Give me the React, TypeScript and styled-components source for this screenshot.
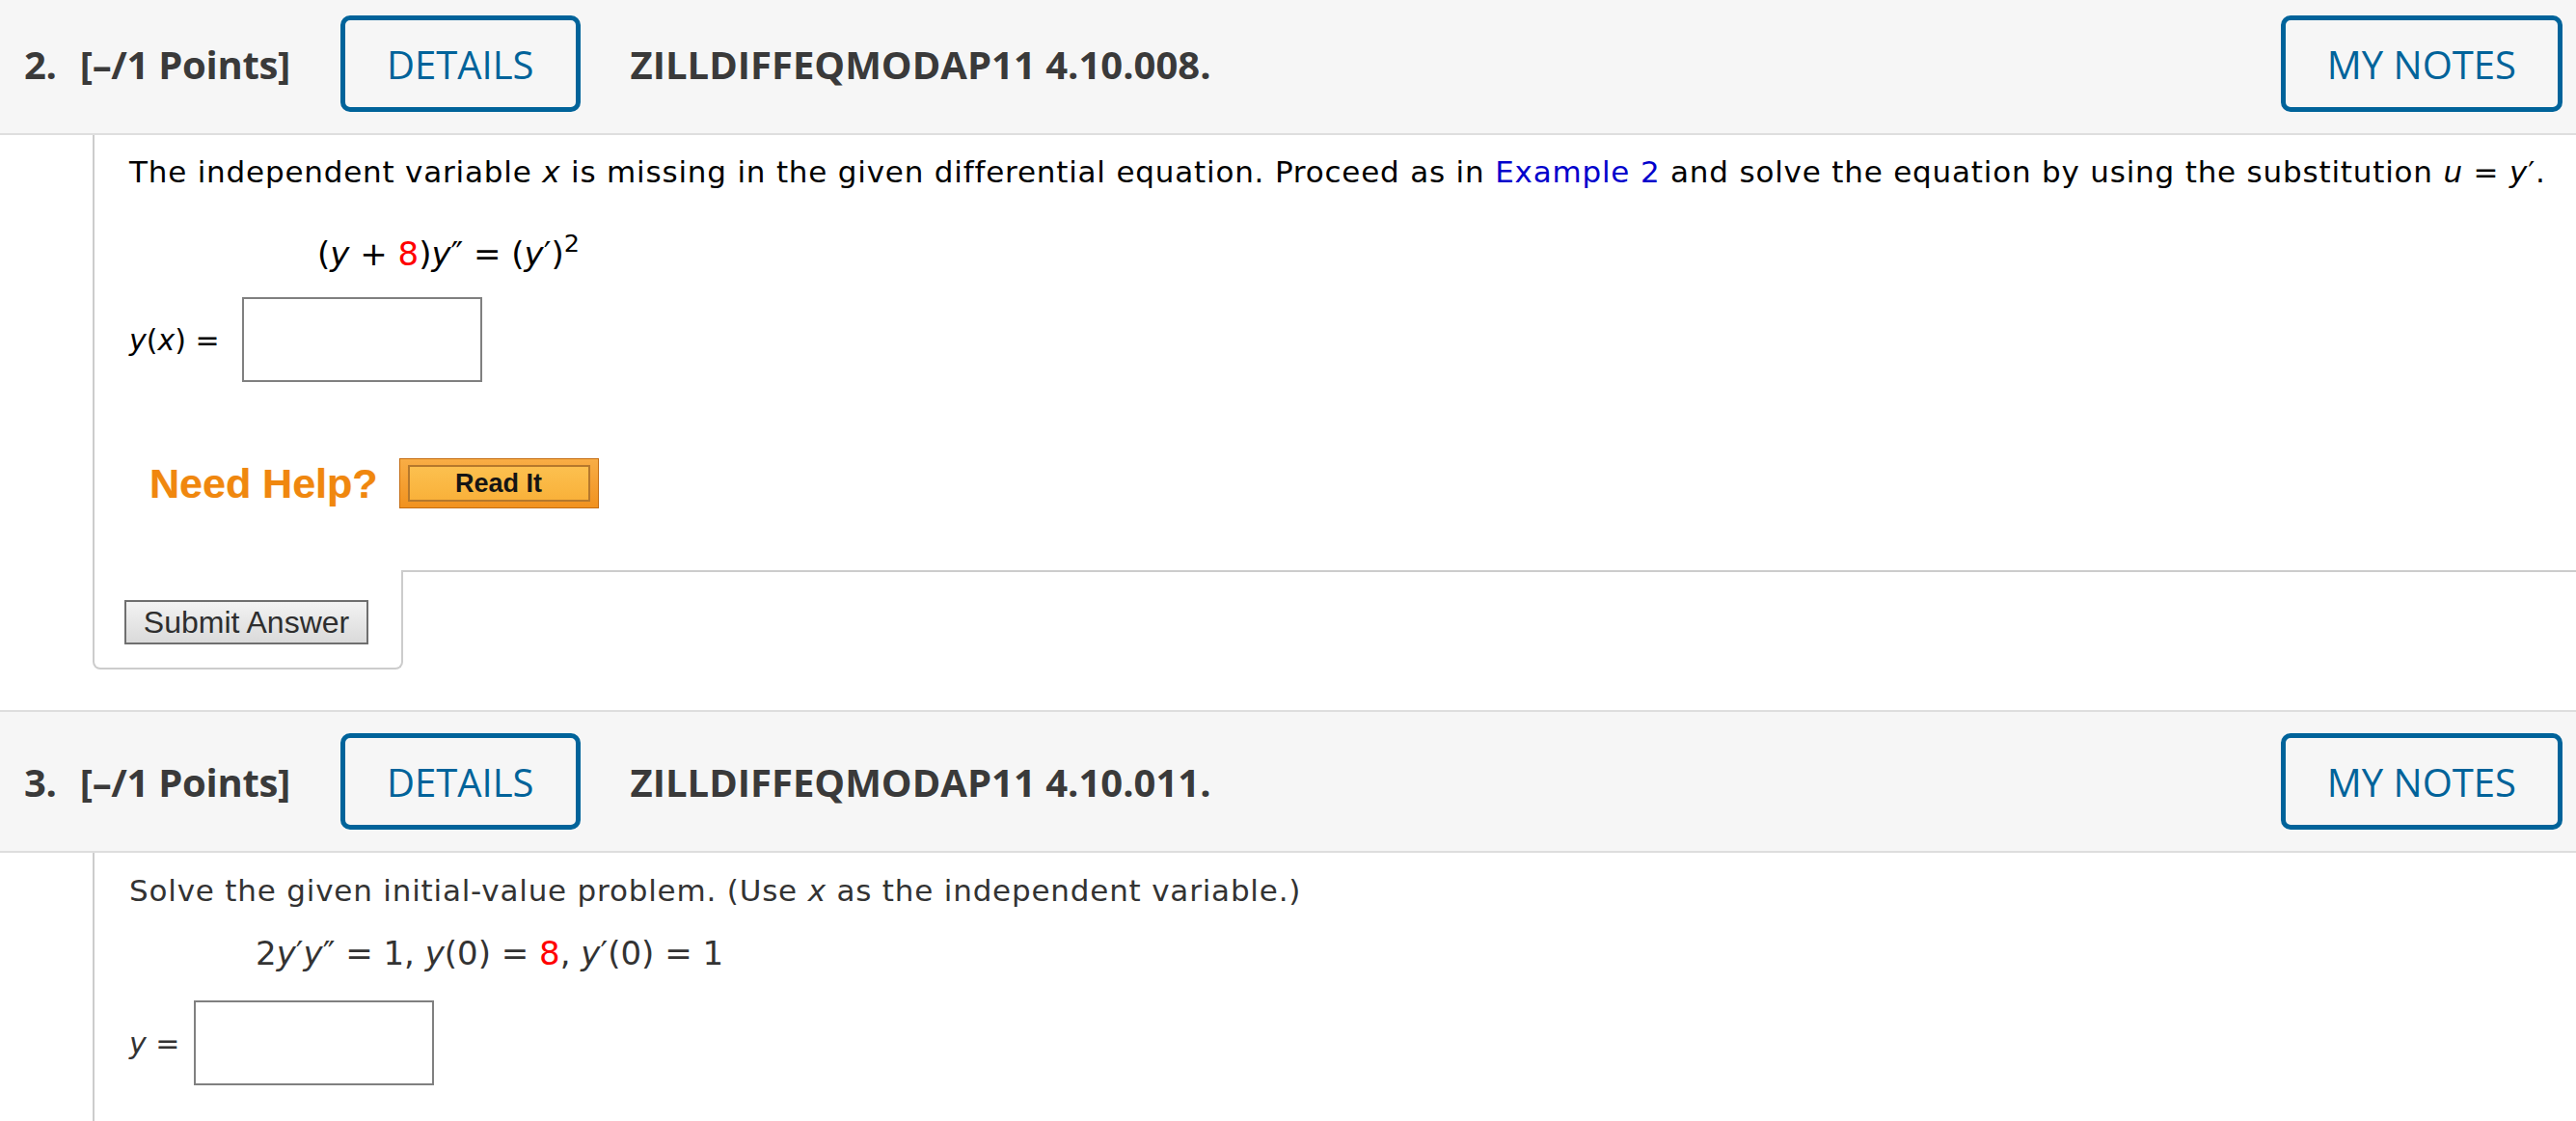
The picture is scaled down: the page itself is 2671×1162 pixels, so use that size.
import React from "react";
import styled, { createGlobalStyle } from "styled-components";

const Global = createGlobalStyle`
  html, body { margin: 0; padding: 0; background: #fff; }
  body { overflow: hidden; }
  #root { width: 2671px; height: 1162px; overflow: hidden; }
`;

const Page = styled.div`
  margin-top: -8px;
  display: flex;
  flex-direction: column;
`;

const Question = styled.section<{ $gap?: number }>`
  display: flex;
  flex-direction: column;
  margin-top: ${(p) => p.$gap ?? 0}px;
`;

const Header = styled.header`
  display: flex;
  align-items: center;
  gap: 52px;
  height: 144px;
  box-sizing: content-box;
  padding: 0 14px 0 25px;
  background: #f6f6f6;
  border-top: 2px solid #dedede;
  border-bottom: 2px solid #dedede;
  font-family: "Open Sans", "Liberation Sans", sans-serif;
  font-size: 40px;
  color: #3a3a3a;
`;

const TitleGroup = styled.div`
  display: flex;
  align-items: center;
  gap: 24px;
  font-weight: 700;
  letter-spacing: -0.3px;
`;

const Code = styled.span`
  font-weight: 700;
  flex: 1;
`;

const OutlineButton = styled.button`
  box-sizing: border-box;
  height: 100px;
  padding: 0 43px;
  border: 5px solid #00639a;
  border-radius: 10px;
  background: transparent;
  color: #00639a;
  font-family: "Open Sans", "Liberation Sans", sans-serif;
  font-size: 40px;
  font-weight: 500;
  cursor: pointer;
`;

const Body = styled.div<{ $top: number; $bottom: number }>`
  margin-left: 96px;
  border-left: 2px solid #cccccc;
  padding: ${(p) => p.$top}px 0 ${(p) => p.$bottom}px 36px;
  font-family: "DejaVu Sans", Verdana, sans-serif;
  display: flex;
  flex-direction: column;
  align-items: flex-start;
`;

const Prompt = styled.p<{ $color: string }>`
  margin: 0;
  font-size: 31px;
  letter-spacing: 0.8px;
  line-height: 40px;
  color: ${(p) => p.$color};
  white-space: nowrap;
`;

const Var = styled.i`
  font-style: italic;
`;

const Link = styled.a`
  color: #0000cc;
  text-decoration: none;
`;

const Equation = styled.div<{ $indent: number; $top: number; $color: string }>`
  margin: ${(p) => p.$top}px 0 0 ${(p) => p.$indent}px;
  font-size: 34px;
  line-height: 40px;
  color: ${(p) => p.$color};
  white-space: nowrap;
`;

const Red = styled.span`
  color: #ff0000;
`;

const Sup = styled.sup`
  font-size: 0.75em;
  vertical-align: 0.55em;
  line-height: 0;
`;

const AnswerRow = styled.div<{ $top: number; $gap: number; $color: string }>`
  margin-top: ${(p) => p.$top}px;
  display: flex;
  align-items: center;
  gap: ${(p) => p.$gap}px;
  font-size: 30px;
  color: ${(p) => p.$color};
`;

const AnswerInput = styled.input`
  box-sizing: border-box;
  width: 249px;
  height: 88px;
  border: 2px solid #808080;
  background: #fff;
  margin: 0;
  padding: 0 8px;
  font-size: 28px;
`;

const HelpRow = styled.div`
  margin-top: 79px;
  padding-left: 21px;
  display: flex;
  align-items: center;
  gap: 22px;
`;

const HelpLabel = styled.span`
  font-family: "Liberation Sans", Arial, sans-serif;
  font-weight: 700;
  font-size: 43px;
  color: #f0870e;
  text-shadow: 0 0 1px rgba(240, 135, 14, 0.5);
`;

const ReadItButton = styled.button`
  box-sizing: border-box;
  width: 207px;
  height: 52px;
  padding: 6px 8px;
  border: 1px solid #c56d12;
  background: linear-gradient(#f8ad45, #f1921f);
  display: flex;
  cursor: pointer;
`;

const ReadItFace = styled.span`
  flex: 1;
  display: flex;
  align-items: center;
  justify-content: center;
  border: 2px solid #b5782c;
  background: linear-gradient(#fcc04f, #f9b13a);
  font-family: "Liberation Sans", Arial, sans-serif;
  font-weight: 700;
  font-size: 27px;
  color: #151515;
`;

const Footer = styled.div`
  display: flex;
  align-items: flex-start;
`;

const SubmitCell = styled.div`
  box-sizing: border-box;
  width: 322px;
  margin-left: 96px;
  padding: 31px 0 24px 31px;
  border: 2px solid #cccccc;
  border-top: none;
  border-radius: 0 0 8px 8px;
`;

const FooterRule = styled.div`
  flex: 1;
  border-top: 2px solid #cccccc;
`;

const SubmitButton = styled.button`
  box-sizing: border-box;
  width: 253px;
  height: 46px;
  padding: 0;
  border: 2px solid #6f6f6f;
  background: linear-gradient(#f3f3f3, #dadada);
  font-family: "Liberation Sans", Arial, sans-serif;
  font-size: 32px;
  color: #2e2e2e;
  cursor: pointer;
`;

type HeadProps = { num: string; code: string };

const QuestionHeader = ({ num, code }: HeadProps) => (
  <Header>
    <TitleGroup>
      <span>{num}</span>
      <span>[–/1 Points]</span>
    </TitleGroup>
    <OutlineButton>DETAILS</OutlineButton>
    <Code>{code}</Code>
    <OutlineButton>MY NOTES</OutlineButton>
  </Header>
);

export default function App() {
  return (
    <>
      <Global />
      <Page>
        <Question>
          <QuestionHeader num="2." code="ZILLDIFFEQMODAP11 4.10.008." />
          <Body $top={18} $bottom={64}>
            <Prompt $color="#000">
              The independent variable <Var>x</Var> is missing in the given differential equation.
              Proceed as in <Link href="#">Example 2</Link> and solve the equation by using the
              substitution <Var>u</Var> = <Var>y</Var>′.
            </Prompt>
            <Equation $indent={195} $top={45} $color="#000">
              (<Var>y</Var> + <Red>8</Red>)<Var>y</Var>″ = (<Var>y</Var>′)<Sup>2</Sup>
            </Equation>
            <AnswerRow $top={25} $gap={23} $color="#000">
              <span>
                <Var>y</Var>(<Var>x</Var>) =
              </span>
              <AnswerInput aria-label="y(x)" />
            </AnswerRow>
            <HelpRow>
              <HelpLabel>Need Help?</HelpLabel>
              <ReadItButton>
                <ReadItFace>Read It</ReadItFace>
              </ReadItButton>
            </HelpRow>
          </Body>
          <Footer>
            <SubmitCell>
              <SubmitButton>Submit Answer</SubmitButton>
            </SubmitCell>
            <FooterRule />
          </Footer>
        </Question>
        <Question $gap={42}>
          <QuestionHeader num="3." code="ZILLDIFFEQMODAP11 4.10.011." />
          <Body $top={19} $bottom={80}>
            <Prompt $color="#333">
              Solve the given initial-value problem. (Use <Var>x</Var> as the independent variable.)
            </Prompt>
            <Equation $indent={131} $top={25} $color="#333">
              2<Var>y</Var>′<Var>y</Var>″ = 1, <Var>y</Var>(0) = <Red>8</Red>, <Var>y</Var>′(0) = 1
            </Equation>
            <AnswerRow $top={29} $gap={15} $color="#333">
              <span>
                <Var>y</Var> =
              </span>
              <AnswerInput aria-label="y" />
            </AnswerRow>
          </Body>
        </Question>
      </Page>
    </>
  );
}
